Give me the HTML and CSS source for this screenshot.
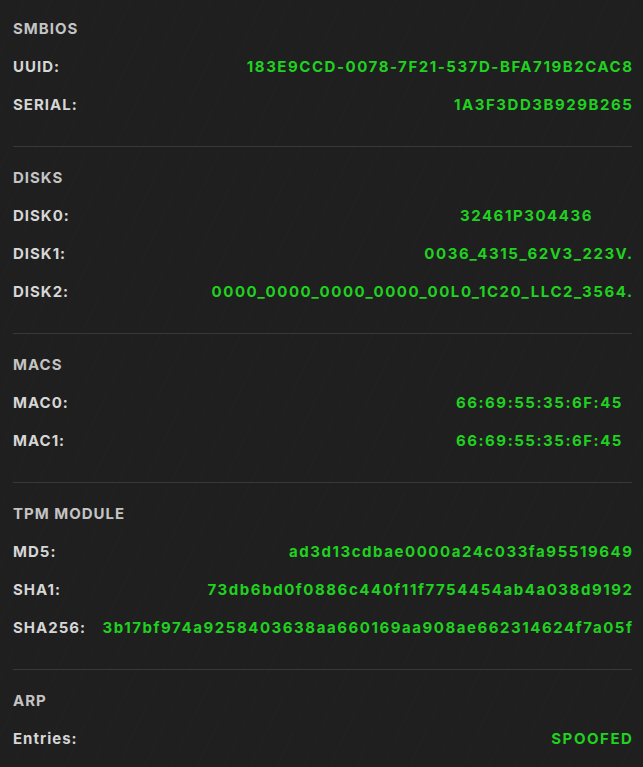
FILE: index.html
```html
<!DOCTYPE html>
<html>
  <head>
    <title>Hardware Info</title>
    <meta charset="utf-8">
    <meta name="viewport" content="width=device-width, initial-scale=1">
    <link rel="stylesheet" href="styles.css">
  </head>
  <body>
    <div class="panel">
      <div class="section first">
        <div class="title">SMBIOS</div>
        <div class="row"><span class="label">UUID:</span><span class="value">183E9CCD-0078-7F21-537D-BFA719B2CAC8</span></div>
        <div class="row"><span class="label">SERIAL:</span><span class="value">1A3F3DD3B929B265</span></div>
      </div>
      <div class="section">
        <div class="title">DISKS</div>
        <div class="row"><span class="label">DISK0:</span><span class="value pad-lg">32461P304436</span></div>
        <div class="row"><span class="label">DISK1:</span><span class="value">0036_4315_62V3_223V.</span></div>
        <div class="row"><span class="label">DISK2:</span><span class="value">0000_0000_0000_0000_00L0_1C20_LLC2_3564.</span></div>
      </div>
      <div class="section">
        <div class="title">MACS</div>
        <div class="row"><span class="label">MAC0:</span><span class="value pad-sm">66:69:55:35:6F:45</span></div>
        <div class="row"><span class="label">MAC1:</span><span class="value pad-sm">66:69:55:35:6F:45</span></div>
      </div>
      <div class="section">
        <div class="title">TPM MODULE</div>
        <div class="row"><span class="label">MD5:</span><span class="value">ad3d13cdbae0000a24c033fa95519649</span></div>
        <div class="row"><span class="label">SHA1:</span><span class="value">73db6bd0f0886c440f11f7754454ab4a038d9192</span></div>
        <div class="row"><span class="label">SHA256:</span><span class="value">3b17bf974a9258403638aa660169aa908ae662314624f7a05f</span></div>
      </div>
      <div class="section last">
        <div class="title">ARP</div>
        <div class="row"><span class="label">Entries:</span><span class="value">SPOOFED</span></div>
      </div>
    </div>
  </body>
</html>
```

FILE: styles.css
```css
body {
  background: #1f1f1f;
  color: #d4d4d4;
  font-family: 'Inter', 'Open Sans', sans-serif;
  font-weight: 700;
  font-size: 15px;
  margin: 0;
}

.panel {
  padding: 0 11px 0 13px;
  min-height: 767px;
  box-sizing: border-box;
  background: repeating-linear-gradient(115deg, rgba(255,255,255,0) 0px, rgba(255,255,255,0) 22px, rgba(255,255,255,0.012) 23px, rgba(255,255,255,0) 24px), #1f1f1f;
}

.section {
  padding: 12px 0 22px;
  border-bottom: 1px solid #383838;
}

.section.first {
  padding-top: 10px;
}

.section.last {
  border-bottom: 0;
}

.title,
.row {
  height: 38px;
  line-height: 38px;
}

.title {
  color: #c4c4c4;
  letter-spacing: 1px;
}

.row {
  display: flex;
  justify-content: space-between;
  white-space: nowrap;
}

.label {
  color: #d6d6d6;
  letter-spacing: 1px;
}

.value {
  color: #1fd21f;
  letter-spacing: 1.55px;
  margin-right: -1.5px;
}

.value.pad-lg {
  margin-right: 39px;
}

.value.pad-sm {
  margin-right: 9px;
}
```
